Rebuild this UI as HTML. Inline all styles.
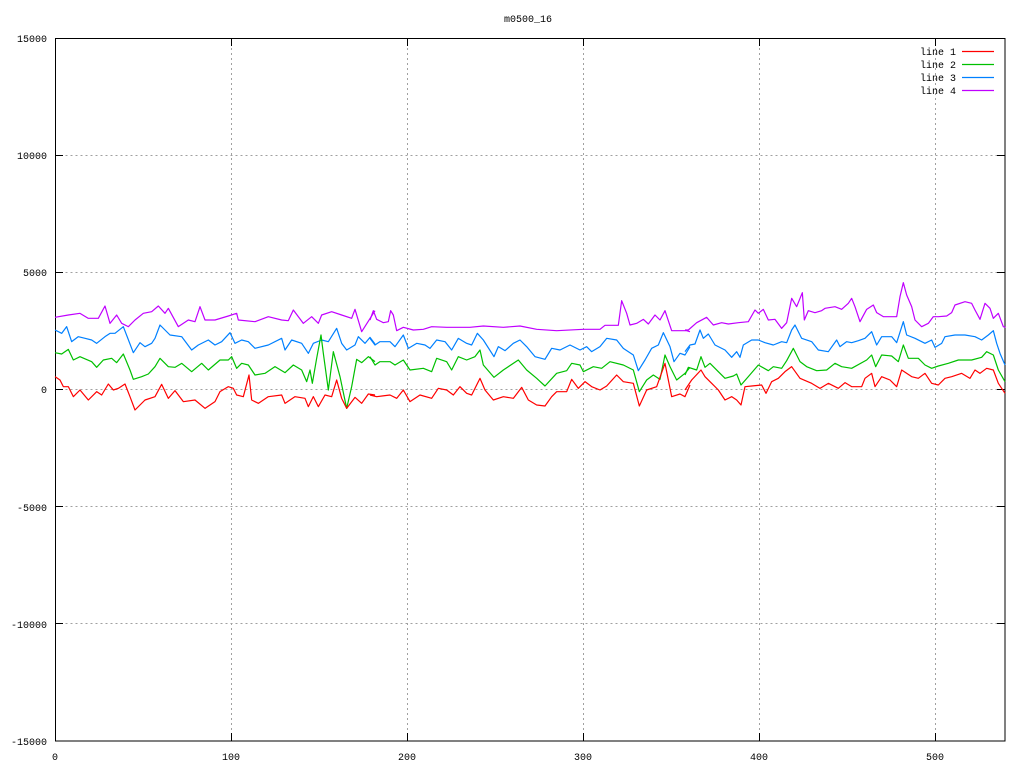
<!DOCTYPE html>
<html><head><meta charset="utf-8"><style>
html,body{margin:0;padding:0;background:#fff;}
svg{display:block;}
text{font-family:"Liberation Mono",monospace;font-size:10px;fill:#000;}
.p{fill:none;stroke-width:1.2;vector-effect:non-scaling-stroke;stroke-linejoin:round;}
</style></head><body>
<svg width="1024" height="768" viewBox="0 0 1024 768" xmlns="http://www.w3.org/2000/svg">
<rect width="1024" height="768" fill="#fff"/>
<g stroke="#a0a0a0" stroke-width="1" stroke-dasharray="2,3" fill="none">
<path d="M55.5 155.5H1005M55.5 272.5H1005M55.5 389.5H1005M55.5 506.5H1005M55.5 623.5H1005"/>
<path d="M231.5 38V741M407.5 38V741M583.5 38V741M759.5 38V741M935.5 38V741"/>
</g>
<g stroke="#000" stroke-width="1" fill="none">
<rect x="55.5" y="38.5" width="949.5" height="702.5"/>
<path d="M55 155.5h8M55 272.5h8M55 389.5h8M55 506.5h8M55 623.5h8M1005 155.5h-8M1005 272.5h-8M1005 389.5h-8M1005 506.5h-8M1005 623.5h-8"/>
<path d="M231.5 741v-8M407.5 741v-8M583.5 741v-8M759.5 741v-8M935.5 741v-8M231.5 38v8M407.5 38v8M583.5 38v8M759.5 38v8M935.5 38v8"/>
</g>
<text x="528" y="22" text-anchor="middle">m0500_16</text>
<g text-anchor="end">
<text x="47" y="42">15000</text><text x="47" y="159">10000</text><text x="47" y="276">5000</text>
<text x="47" y="393">0</text><text x="47" y="511">-5000</text><text x="47" y="628">-10000</text><text x="47" y="745">-15000</text>
</g>
<g text-anchor="middle">
<text x="55" y="760">0</text><text x="231" y="760">100</text><text x="407" y="760">200</text>
<text x="583" y="760">300</text><text x="759" y="760">400</text><text x="935" y="760">500</text>
</g>
<g text-anchor="end">
<text x="956" y="55">line 1</text><text x="956" y="68">line 2</text><text x="956" y="81">line 3</text><text x="956" y="94">line 4</text>
</g>
<path d="M962 51.5h32" stroke="#ff0000" stroke-width="1.2"/>
<path d="M962 64.5h32" stroke="#00c000" stroke-width="1.2"/>
<path d="M962 77.5h32" stroke="#0080ff" stroke-width="1.2"/>
<path d="M962 90.5h32" stroke="#c000ff" stroke-width="1.2"/>

<g transform="translate(55,280) scale(0.33333)">
<polyline class="p" stroke="#c000ff" points="0,112 40,105 75,100 100,115 130,115 150,78 165,130 185,105 200,130 220,140 240,120 265,100 290,95 310,78 330,100 340,85 370,140 400,120 420,125 435,80 450,120 480,120 520,108 545,100 550,120 600,125 640,110 680,120 700,122 715,90 745,130 770,110 790,130 800,105 830,95 860,105 890,115 900,88 920,155 960,92"/>
<polyline class="p" stroke="#0080ff" points="0,150 20,160 35,140 50,185 70,170 90,175 110,180 125,190 150,170 165,160 180,160 205,140 235,218 255,188 270,200 290,190 300,175 315,135 330,150 345,165 380,170 410,210 430,195 460,180 480,195 500,185 525,158 540,190 560,180 580,185 600,205 640,195 680,175 690,210 710,180 740,190 760,220 775,190 800,180 820,185 845,145 860,190 875,210 900,195 910,170 930,190 945,172 960,192"/>
<polyline class="p" stroke="#00c000" points="0,218 20,222 40,208 55,240 75,230 110,245 125,262 145,240 170,235 185,248 205,222 225,270 235,298 260,290 280,282 300,260 315,235 340,260 360,262 380,250 410,275 440,250 460,270 495,240 520,240 530,230 545,265 560,250 580,255 600,285 630,280 660,260 690,278 715,255 740,270 755,305 765,270 772,310 785,235 798,165 805,220 820,330 835,215 855,290 875,385 890,320 905,238 920,248 940,230 960,245"/>
<polyline class="p" stroke="#ff0000" points="0,290 15,300 25,320 40,320 55,350 75,330 100,360 125,335 140,345 160,312 175,330 190,325 210,312 225,350 240,390 270,360 300,350 320,313 340,355 360,332 385,365 420,360 450,385 480,365 495,335 520,320 535,325 545,345 565,350 582,285 590,360 610,370 640,350 680,345 690,370 720,350 750,355 760,380 775,350 790,380 810,345 830,350 845,300 860,355 875,385 900,352 920,370 940,342 960,345"/>
</g>
<g transform="translate(370,280) scale(0.33333)">
<polyline class="p" stroke="#c000ff" points="0,120 10,92 20,118 40,128 55,125 62,92 70,105 80,152 100,142 130,150 160,148 185,140 230,142 300,142 340,138 400,142 450,138 500,148 560,152 640,148 690,148 705,136 745,136 755,62 770,100 780,135 800,130 820,118 835,132 855,105 870,120 885,92 905,152 950,152 960,155"/>
<polyline class="p" stroke="#0080ff" points="0,175 15,195 30,185 60,185 75,200 100,165 115,205 140,190 165,195 180,205 200,180 225,185 245,210 265,175 290,190 305,195 322,160 340,180 372,230 385,200 405,212 430,190 450,180 470,200 495,230 525,238 545,205 570,210 600,195 630,210 650,200 665,215 690,200 710,175 740,180 760,205 790,225 805,272 825,240 845,205 865,195 880,158 900,200 912,245 930,220 945,225 960,200"/>
<polyline class="p" stroke="#00c000" points="0,230 15,255 30,245 60,245 75,255 100,240 120,270 160,265 185,275 200,235 230,245 245,270 265,230 290,240 315,230 330,210 340,255 372,292 400,270 445,240 470,270 500,295 525,318 560,280 590,272 605,250 630,255 640,275 670,260 695,265 720,245 760,255 790,270 808,335 830,300 850,285 870,298 885,225 900,260 920,300 945,280 960,262"/>
<polyline class="p" stroke="#ff0000" points="0,345 20,350 60,345 80,355 100,330 120,365 150,345 185,355 205,325 230,330 250,345 270,320 290,340 305,345 330,295 345,330 370,360 400,350 430,355 455,322 475,360 500,375 525,378 545,350 560,335 590,335 605,298 625,325 645,305 665,320 690,330 710,318 740,285 760,305 790,310 808,378 830,330 860,320 885,250 905,350 930,342 945,350 960,315"/>
</g>
<g transform="translate(685,270) scale(0.33333)">
<polyline class="p" stroke="#c000ff" points="0,180 10,180 35,158 65,142 85,165 110,158 130,162 160,158 190,155 210,120 220,130 235,118 250,150 270,148 290,175 305,158 320,85 335,110 352,68 358,150 370,122 390,128 410,122 420,115 450,110 470,118 490,100 500,85 510,110 525,155 545,118 565,105 575,128 595,140 635,140 645,80 655,38 665,75 680,110 690,150 710,170 730,160 745,140 760,140 785,138 800,128 810,105 840,95 860,100 870,120 885,148 900,100 915,115 925,145 940,130 955,170 962,172"/>
<polyline class="p" stroke="#0080ff" points="0,245 15,225 30,222 45,180 55,205 70,192 90,225 120,240 140,262 155,245 165,262 175,225 200,210 220,210 240,218 265,225 290,215 305,218 320,180 330,165 350,205 380,215 400,240 430,245 455,210 465,230 485,215 500,218 520,212 540,205 560,185 575,225 590,200 620,200 635,218 655,155 665,195 690,205 720,220 740,210 750,232 770,220 780,200 810,195 840,195 870,200 890,210 910,195 925,182 935,220 945,250 960,285"/>
<polyline class="p" stroke="#00c000" points="0,315 10,292 35,300 48,260 60,292 75,280 100,305 120,325 145,318 155,312 168,345 190,320 220,285 250,302 265,290 290,295 305,272 325,235 345,275 365,290 395,302 425,300 450,280 470,290 500,295 545,270 560,255 572,290 590,255 620,258 640,275 655,225 670,265 700,265 720,285 740,295 760,288 790,280 820,270 860,270 890,262 905,245 925,255 940,300 960,335"/>
<polyline class="p" stroke="#ff0000" points="0,360 20,330 48,300 60,320 80,340 100,360 120,390 140,380 155,390 168,405 180,350 200,348 230,345 243,370 260,335 280,325 300,305 320,290 345,325 380,340 405,355 430,340 460,355 480,338 500,350 530,350 540,325 560,310 570,350 590,320 615,330 635,350 650,300 680,320 700,325 720,310 740,340 760,345 780,325 800,320 830,310 855,325 870,300 885,310 905,295 925,300 940,340 950,355 960,370"/>
</g>
</svg>
</body></html>
